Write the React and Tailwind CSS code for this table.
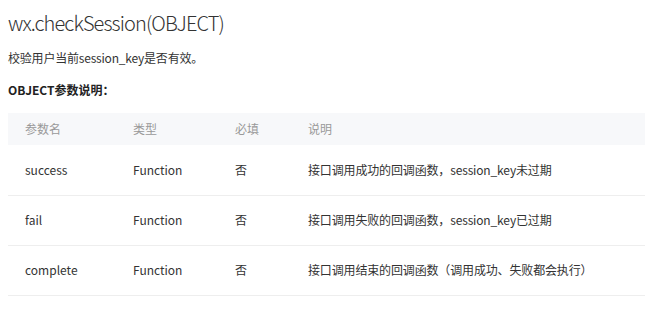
import React from 'react';

const rows = [
  { name: 'success', type: 'Function', required: '否', desc: '接口调用成功的回调函数，session_key未过期' },
  { name: 'fail', type: 'Function', required: '否', desc: '接口调用失败的回调函数，session_key已过期' },
  { name: 'complete', type: 'Function', required: '否', desc: '接口调用结束的回调函数（调用成功、失败都会执行）' },
];

const App = () => {
  return (
    <div className="w-[645px] h-[319px] bg-white overflow-hidden pl-2 text-[#333] font-['Noto_Sans_CJK_SC',sans-serif]">
      <h1 className="pt-[9px] text-[20px] leading-[28px] font-light tracking-[-0.9px] text-[#333]">wx.checkSession(OBJECT)</h1>
      <p className="mt-[12px] text-[12px] leading-[18px] tracking-[-0.2px] text-[#333]">校验用户当前session_key是否有效。</p>
      <p className="mt-[14px] text-[12px] leading-[18px] font-bold text-[#222]">OBJECT参数说明：</p>

      <table className="mt-[14px] w-[637px] border-collapse text-[12px]">
        <thead>
          <tr className="bg-[#f7f8fa] h-[32px]">
            <th className="text-left font-normal text-[#999] pl-[17px] w-[125px]">参数名</th>
            <th className="text-left font-normal text-[#999] w-[102px]">类型</th>
            <th className="text-left font-normal text-[#999] w-[73px]">必填</th>
            <th className="text-left font-normal text-[#999]">说明</th>
          </tr>
        </thead>
        <tbody>
          {rows.map((row) => (
            <tr key={row.name} className="h-[50px] border-b border-[#eeeeee]">
              <td className="pl-[17px] text-[#333]">{row.name}</td>
              <td className="text-[#333]">{row.type}</td>
              <td className="text-[#333]">{row.required}</td>
              <td className="text-[#333] tracking-[-0.15px]">{row.desc}</td>
            </tr>
          ))}
        </tbody>
      </table>
    </div>
  );
};

export default App;
